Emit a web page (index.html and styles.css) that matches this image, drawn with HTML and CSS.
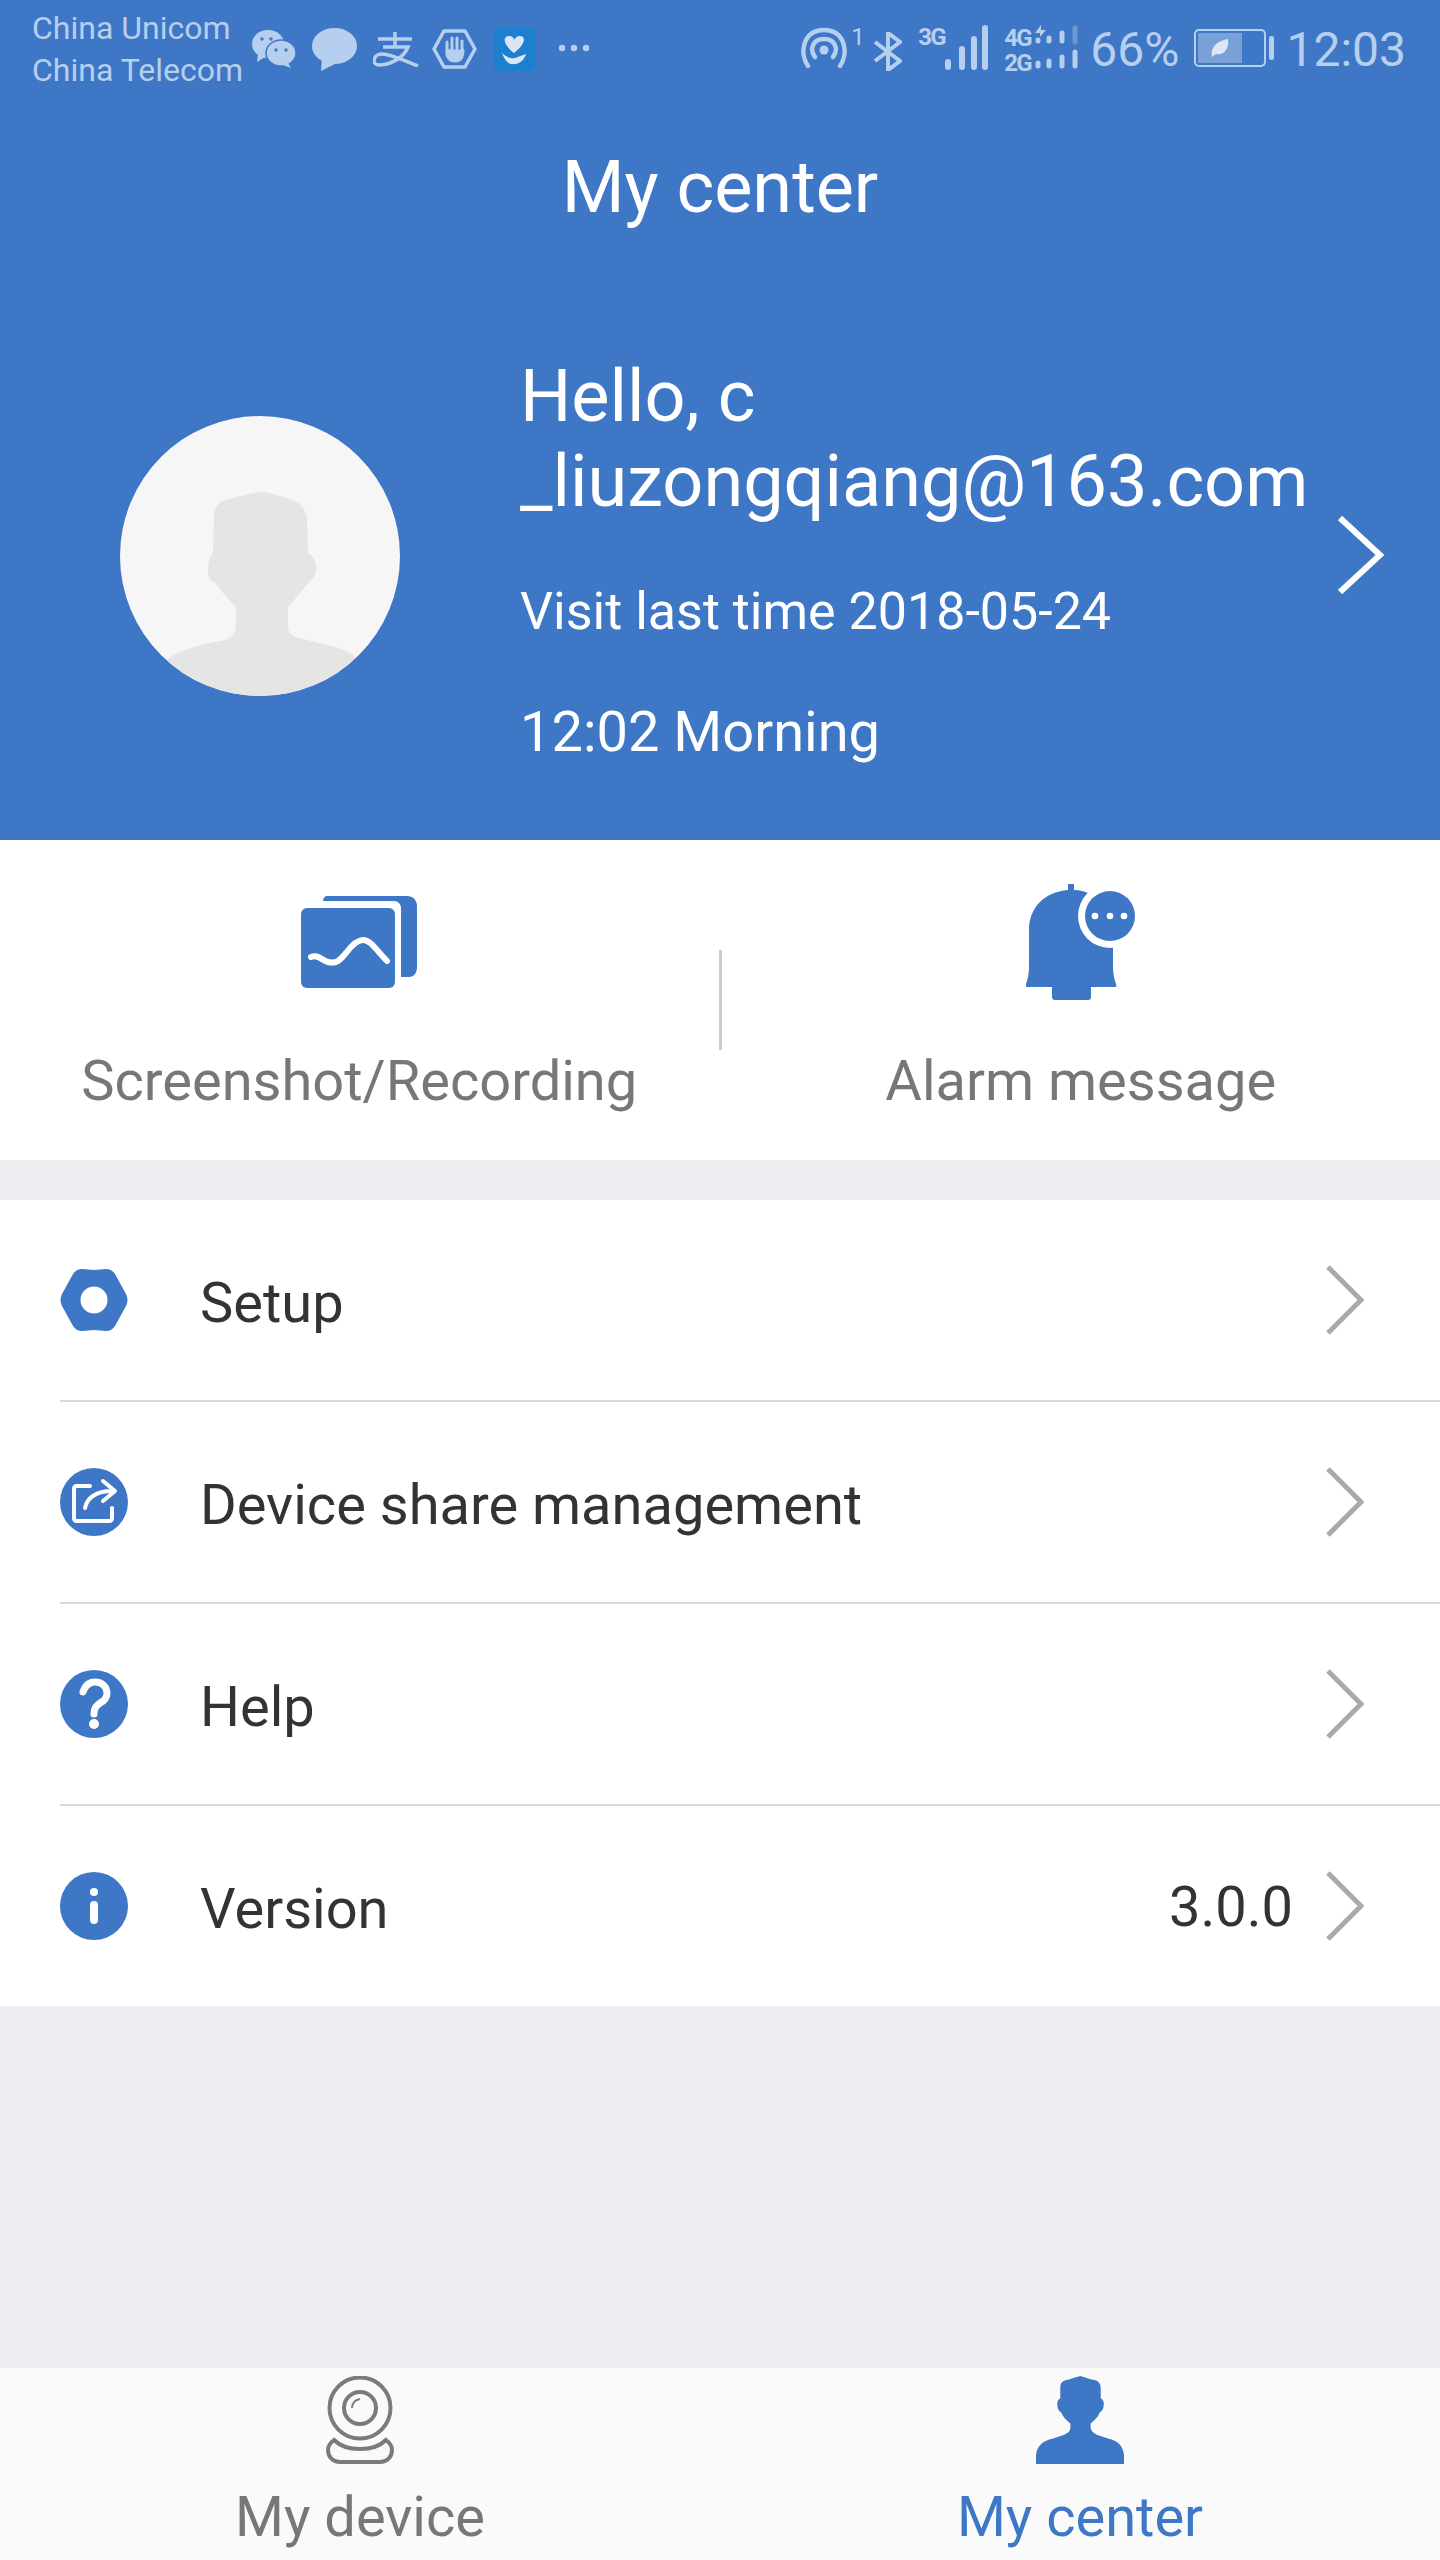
FILE: index.html
```html
<!doctype html>
<html>
<head>
<meta charset="utf-8">
<title>My center</title>
<link rel="stylesheet" href="styles.css">
</head>
<body>
<div class="page">
	<!--顶部蓝色区域-->
	<div class="top">
		<div class="status">
			<div class="carrier">
				<div>China Unicom</div>
				<div>China Telecom</div>
			</div>
			<svg class="st st-wechat" viewBox="0 0 45 38"><ellipse cx="17" cy="14" rx="16" ry="14" fill="#b7cfee"/><path d="M7 24l-1 8 8-5z" fill="#b7cfee"/><ellipse cx="30" cy="23" rx="15" ry="13" fill="#b7cfee" stroke="#3e77c6" stroke-width="1.5"/><path d="M37 33l3 5-8-3z" fill="#b7cfee"/><circle cx="11" cy="9" r="1.7" fill="#3e77c6"/><circle cx="20" cy="9" r="1.7" fill="#3e77c6"/><circle cx="25" cy="20" r="1.7" fill="#3e77c6"/><circle cx="35" cy="20" r="1.7" fill="#3e77c6"/></svg>
			<svg class="st st-bubble" viewBox="0 0 45 43"><ellipse cx="22.500" cy="18" rx="22.500" ry="18" fill="#b7cfee"/><path d="M10 30l-1 13 18-9z" fill="#b7cfee"/></svg>
			<svg class="st st-ali" viewBox="0 0 46 35"><path d="M22 0v16M5 7h34M10 15h25C30 28 14 33 6 33c-8 0-6-11 3-11 10 0 22 7 36 12" fill="none" stroke="#b7cfee" stroke-width="3.500"/></svg>
			<svg class="st st-hand" viewBox="0 0 45 40"><path d="M12 2h21l10 18-10 18H12L2 20z" fill="none" stroke="#b7cfee" stroke-width="3.500" stroke-linejoin="round"/><path d="M15 22V13M20 20V9M25 20V9M30 21V12M15 20c-1 9 3 12 8 12s8-3 8-11" fill="#b7cfee" stroke="#b7cfee" stroke-width="3" stroke-linecap="round"/></svg>
			<svg class="st st-care" viewBox="0 0 41 43"><rect width="41" height="43" rx="5" fill="#1c7fd0"/><path d="M20 25C8 16 9 8 15 8c3 0 5 2 5 4 1-2 3-4 6-4 6 0 6 8-6 17z" fill="#d8e6f6"/><path d="M8 25c6 5 9 6 13 5l11-4c-2 7-8 11-14 10-4 0-8-5-10-11z" fill="#d8e6f6"/></svg>
			<svg class="st st-dots" viewBox="0 0 32 8"><circle cx="4" cy="4" r="3.200" fill="#b7cfee"/><circle cx="16" cy="4" r="3.200" fill="#b7cfee"/><circle cx="28" cy="4" r="3.200" fill="#b7cfee"/></svg>
			<div class="status-right">
				<svg class="st st-wifi" viewBox="0 0 48 41"><path d="M8 39C-1 26 3 3 24 3s25 23 16 36M15 30C9 22 13 12 24 12s15 10 9 18" fill="none" stroke="#b7cfee" stroke-width="4.500" stroke-linecap="round"/><circle cx="24" cy="23" r="4.500" fill="#b7cfee"/></svg>
				<span class="st-sup">1</span>
				<svg class="st st-bt" viewBox="0 0 29 39"><path d="M2 10l25 19-12 9V1l12 9L2 29" fill="none" stroke="#b7cfee" stroke-width="4"/></svg>
				<span class="st-net">3G</span>
				<svg class="st st-bars" viewBox="0 0 46 45"><g stroke="#b7cfee" stroke-width="6" stroke-linecap="round"><path d="M6 37v5M20 24v18M32 14v28M43 3v39"/></g></svg>
				<div class="st-net2">
					<span>4G</span>
					<span>2G</span>
				</div>
				<svg class="st st-bars2" viewBox="0 0 46 45"><g stroke="#b7cfee" stroke-width="5" stroke-linecap="round"><path d="M4 15v1M15 13v3M28 8v8"/><path d="M41 3v14" stroke="#6f98d3"/><path d="M4 38v3M15 36v5M28 32v9M41 27v14"/></g><path d="M7 0L1 8h5v4l6-7H7zM16 1v8" fill="#b7cfee"/></svg>
				<span class="st-pct">66%</span>
				<div class="battery">
					<div class="battery-fill">
						<svg class="leaf" viewBox="0 0 18 20"><path d="M1 19C-1 9 6 3 17 1c1 11-4 16-12 15z" fill="#dbe7f6"/></svg>
					</div>
				</div>
				<div class="battery-nub"></div>
				<span class="st-time">12:03</span>
			</div>
		</div>
		<div class="title">My center</div>
		<div class="profile">
			<div class="avatar">
				<svg viewBox="0 0 280 280"><path d="M48 243C62 232 85 228 105 224c8-2 11-8 11-16V191l-13-14-8-10c-5-2-7-7-7-13 0-8 2-14 5-17l1-37c0-8 4-14 11-16 13-3 26-8 40-8 12 3 23 6 33 11 5 3 8 8 9 17l1 33c5 3 8 8 8 14 0 6-2 11-5 13l-23 27v20c0 6 4 9 11 11l36 9c7 2 13 5 19 9v40H48z" fill="#e5e5e5"/></svg>
			</div>
			<div class="info">
				<div class="hello">Hello, c<br>_liuzongqiang@163.com</div>
				<div class="visit">Visit last time 2018-05-24</div>
				<div class="visit visit-time">12:02 Morning</div>
			</div>
			<svg class="profile-arrow" viewBox="0 0 48 80"><path d="M3 3l40 37L3 77" fill="none" stroke="#fff" stroke-width="6"/></svg>
		</div>
	</div>
	<!--截图和告警-->
	<div class="actions">
		<div class="action">
			<svg class="action-icon icon-shot" viewBox="0 0 116 92"><path d="M26 0h80c6 0 10 4 10 10v61c0 6-3 10-8 10h-8V12c0-4-3-7-7-7H22c0-3 2-5 4-5z" fill="#3e77c6"/><rect y="12" width="94" height="80" rx="6" fill="#3e77c6"/><path d="M10 61c7-3 10 3 17 5 9 2 12-2 18-9 6-8 11-13 17-13 8 0 13 10 24 21" fill="none" stroke="#fff" stroke-width="6" stroke-linecap="round"/></svg>
			<div class="action-label">Screenshot/Recording</div>
		</div>
		<div class="action-line"></div>
		<div class="action">
			<svg class="action-icon icon-bell" viewBox="0 0 109 116"><path d="M42 0h6v6c23 1 39 18 39 42v35c0 6 1 11 3 17 1 2 0 3-2 3H65v10c0 2-1 3-3 3H29c-2 0-3-1-3-3v-10H2c-2 0-3-1-2-3 2-6 3-11 3-17V46C3 24 18 8 42 6z" fill="#3e77c6"/><circle cx="84" cy="32" r="32" fill="#fff"/><circle cx="84" cy="32" r="25" fill="#3e77c6"/><circle cx="69" cy="32" r="3.300" fill="#fff"/><circle cx="84" cy="32" r="3.300" fill="#fff"/><circle cx="98" cy="32" r="3.300" fill="#fff"/></svg>
			<div class="action-label">Alarm message</div>
		</div>
	</div>
	<!--菜单列表-->
	<div class="menu">
		<div class="row">
			<svg class="row-icon" viewBox="0 0 68 68"><path d="M22 3c4 0 8 1 12 1s8-1 12-1c4 0 7 2 9 5l11 20c2 4 2 8 0 12L55 60c-2 3-5 5-9 5-4 0-8-1-12-1s-8 1-12 1c-4 0-7-2-9-5L2 40c-2-4-2-8 0-12L13 8c2-3 5-5 9-5z" fill="#3e77c6"/><circle cx="34" cy="34" r="13.500" fill="#fff"/></svg>
			<div class="row-text">Setup</div>
			<svg class="row-arrow" viewBox="0 0 38 70"><path d="M2 2l33 33L2 68" fill="none" stroke="#aaa" stroke-width="5"/></svg>
		</div>
		<div class="row">
			<svg class="row-icon" viewBox="0 0 68 68"><circle cx="34" cy="34" r="34" fill="#3e77c6"/><path d="M30 18H17q-3 0-3 3V50q0 3 3 3H49q3 0 3-3V40M25 40C27 30 36 23 52 23M43 13l12 10-12 10" fill="none" stroke="#fff" stroke-width="4" stroke-linecap="round" stroke-linejoin="round"/></svg>
			<div class="row-text">Device share management</div>
			<svg class="row-arrow" viewBox="0 0 38 70"><path d="M2 2l33 33L2 68" fill="none" stroke="#aaa" stroke-width="5"/></svg>
		</div>
		<div class="row">
			<svg class="row-icon" viewBox="0 0 68 68"><circle cx="34" cy="34" r="34" fill="#3e77c6"/><path d="M23 22c2-6 6-10 12-10 7 0 12 5 12 11 0 5-3 8-7 10-4 3-6 5-6 11" fill="none" stroke="#fff" stroke-width="7" stroke-linecap="round"/><circle cx="34" cy="54" r="5" fill="#fff"/></svg>
			<div class="row-text">Help</div>
			<svg class="row-arrow" viewBox="0 0 38 70"><path d="M2 2l33 33L2 68" fill="none" stroke="#aaa" stroke-width="5"/></svg>
		</div>
		<div class="row">
			<svg class="row-icon" viewBox="0 0 68 68"><circle cx="34" cy="34" r="34" fill="#3e77c6"/><circle cx="34" cy="20" r="4" fill="#fff"/><rect x="30" y="29" width="8" height="23" rx="4" fill="#fff"/></svg>
			<div class="row-text">Version</div>
			<div class="row-value">3.0.0</div>
			<svg class="row-arrow" viewBox="0 0 38 70"><path d="M2 2l33 33L2 68" fill="none" stroke="#aaa" stroke-width="5"/></svg>
		</div>
	</div>
	<div class="space"></div>
	<!--底部导航-->
	<div class="tabs">
		<div class="tab">
			<svg class="tab-icon" viewBox="0 0 68 88"><circle cx="34" cy="32" r="30.500" fill="none" stroke="#7b7b7b" stroke-width="4"/><circle cx="34" cy="32" r="16" fill="none" stroke="#7b7b7b" stroke-width="4"/><path d="M26 32c0-5 3-8 8-9" fill="none" stroke="#7b7b7b" stroke-width="2"/><path d="M8 64c6 6 16 9 26 9s20-3 26-9c4 3 6 6 6 10 0 7-5 12-12 12H14C7 86 2 81 2 74c0-4 2-7 6-10z" fill="none" stroke="#7b7b7b" stroke-width="4"/></svg>
			<div class="tab-label">My device</div>
		</div>
		<div class="tab tab-on">
			<svg class="tab-icon" viewBox="0 0 87 87"><path d="M0 87V78C1 68 8 64 16 62L28 58C33 56 34 54 34 50V47C29 43 26 39 25 36 22 35 21 31 21 27 21 25 22 23 24 22V12C24 7 26 5 30 4 35 3 39 1 44 0 48 1 52 3 58 4 62 5 64 8 64 12V22C66 23 67 25 67 27 67 31 66 35 63 36 62 39 59 43 54 47V50C54 54 56 56 60 58L72 62C80 64 86 68 87 78V87z" fill="#3e77c6"/></svg>
			<div class="tab-label">My center</div>
		</div>
	</div>
</div>
</body>
</html>
```

FILE: styles.css
```css
*{
	margin:0;
	padding:0;
	box-sizing:border-box;
}
body
{
	font-family:Roboto,"Liberation Sans",sans-serif;
	background-color:#eeeef3;
}
.page
{
	width:1440px;
	height:2560px;
	display:flex;
	flex-direction:column;
	overflow:hidden;
}
svg
{
	display:block;
	flex:none;
}
/*顶部*/
.top
{
	height:840px;
	flex:none;
	background-color:#3e77c6;
	color:#fff;
}
.status
{
	height:96px;
	padding:7px 34px 0 32px;
	display:flex;
	align-items:flex-start;
	color:#b7cfee;
}
.carrier
{
	width:219px;
	font-size:32px;
	line-height:42px;
	white-space:nowrap;
}
.st-wechat{width:45px;height:38px;margin-top:23px;}
.st-bubble{width:45px;height:43px;margin:21px 0 0 16px;}
.st-ali{width:46px;height:35px;margin:25px 0 0 16px;}
.st-hand{width:45px;height:40px;margin:22px 0 0 13px;}
.st-care{width:41px;height:43px;margin:21px 0 0 17px;}
.st-dots{width:32px;height:8px;margin:37px 0 0 23px;}
.status-right
{
	margin-left:auto;
	display:flex;
	align-items:flex-start;
}
.st-wifi{width:48px;height:41px;margin-top:20px;}
.st-sup{font-size:24px;line-height:22px;width:13px;margin:19px 0 0 3px;}
.st-bt{width:29px;height:39px;margin:25px 0 0 9px;}
.st-net
{
	font-size:24px;
	font-weight:700;
	letter-spacing:-2px;
	line-height:22px;
	width:24px;
	margin:19px 0 0 16px;
}
.st-bars{width:46px;height:45px;margin-top:18px;}
.st-net2
{
	width:30px;
	margin:19px 0 0 16px;
	font-size:24px;
	font-weight:700;
	letter-spacing:-2px;
	line-height:25px;
	display:flex;
	flex-direction:column;
}
.st-bars2{width:46px;height:45px;margin-top:18px;}
.st-pct{font-size:48px;line-height:56px;margin:15px 0 0 10px;}
.battery
{
	width:72px;
	height:38px;
	margin:22px 0 0 15px;
	border:2px solid #b7cfee;
	border-radius:5px;
	padding:2px;
}
.battery-fill
{
	width:44px;
	height:100%;
	background-color:#7aa0d8;
	display:flex;
	align-items:center;
	justify-content:center;
}
.leaf{width:18px;height:20px;}
.battery-nub
{
	width:5px;
	height:24px;
	margin:29px 0 0 3px;
	background-color:#b7cfee;
	border-radius:2px;
}
.st-time{font-size:48px;line-height:56px;margin:15px 0 0 12px;}
.title
{
	height:92px;
	margin-top:46px;
	font-size:72px;
	line-height:92px;
	text-align:center;
}
.profile
{
	display:flex;
	padding:120px 55px 0 120px;
	align-items:flex-start;
}
.avatar
{
	width:280px;
	height:280px;
	margin-top:62px;
	border-radius:50%;
	background-color:#f6f6f6;
	overflow:hidden;
	flex:none;
}
.info
{
	margin-left:120px;
	white-space:nowrap;
	flex:1;
}
.hello
{
	font-size:72px;
	line-height:85px;
}
.visit
{
	font-size:52px;
	line-height:60px;
	margin-top:58px;
}
.visit-time
{
	font-size:56px;
	margin-top:60px;
}
.profile-arrow
{
	width:48px;
	height:80px;
	margin-top:161px;
}
/*截图和告警*/
.actions
{
	height:320px;
	flex:none;
	background-color:#fff;
	display:flex;
	align-items:center;
	margin-bottom:40px;
}
.action
{
	flex:1;
	height:320px;
	display:flex;
	flex-direction:column;
	align-items:center;
}
.icon-shot
{
	width:116px;
	height:92px;
	margin-top:56px;
}
.icon-bell
{
	width:109px;
	height:116px;
	margin-top:44px;
}
.action-label
{
	font-size:56px;
	line-height:70px;
	color:#777;
	white-space:nowrap;
	margin-top:auto;
	margin-bottom:44px;
}
.action-line
{
	width:3px;
	height:100px;
	background-color:#ccc;
}
/*菜单*/
.menu
{
	background-color:#fff;
	flex:none;
}
.row
{
	height:202px;
	margin-left:60px;
	display:flex;
	align-items:center;
	padding-right:76px;
	border-bottom:2px solid #d9d9d9;
}
.row:last-child
{
	height:200px;
	border-bottom:none;
}
.row-icon
{
	width:68px;
	height:68px;
}
.row-text
{
	margin-left:72px;
	padding-top:6px;
	font-size:56px;
	color:#333;
	flex:1;
}
.row-value
{
	padding-top:2px;
	font-size:56px;
	color:#333;
	margin-right:33px;
}
.row-arrow
{
	width:38px;
	height:70px;
}
.space
{
	flex:1;
}
/*底部*/
.tabs
{
	height:192px;
	flex:none;
	background-color:#fafafa;
	display:flex;
}
.tab
{
	flex:1;
	display:flex;
	flex-direction:column;
	align-items:center;
	padding-top:8px;
	color:#777;
}
.tab-on
{
	color:#3e77c6;
}
.tab-icon
{
	height:88px;
}
.tab-label
{
	font-size:56px;
	line-height:70px;
	margin-top:18px;
}
```
